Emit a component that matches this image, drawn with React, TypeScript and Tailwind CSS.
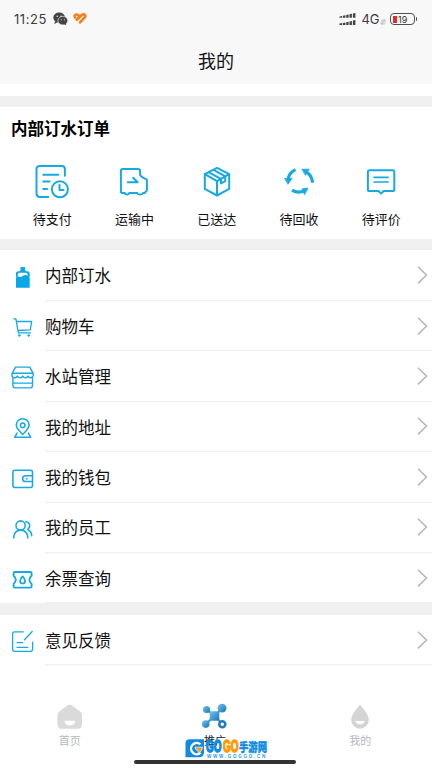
import type { ReactNode } from "react";

const BLUE = "#17a9e1";

function StatusIcons() {
  return (
    <svg viewBox="50 8 42 22" className="h-[22px] w-[42px]">
      <ellipse cx="59.2" cy="17.6" rx="5.9" ry="5.1" fill="#444" />
      <path d="M55 21l-.6 3 3-1.6z" fill="#444" />
      <ellipse cx="62.8" cy="20.6" rx="4.9" ry="4.3" fill="#444" stroke="#f8f8f8" strokeWidth=".6" />
      <path d="M64 24l2.2 1.3-.4-2.4z" fill="#444" />
      <circle cx="57.2" cy="16.3" r=".7" fill="#f8f8f8" />
      <circle cx="61" cy="16.3" r=".7" fill="#f8f8f8" />
      <circle cx="61.2" cy="19.7" r=".55" fill="#f8f8f8" />
      <circle cx="64.4" cy="19.7" r=".55" fill="#f8f8f8" />
      <g fill="none" stroke="#f58220" strokeWidth="2.7" strokeLinecap="round" strokeLinejoin="round">
        <path d="M74.9 17.3c-1-2.8 2-3.6 3.8-1.8" />
        <path d="M76.6 19.2l4.8-4c2.2-1.8 4.6-.6 3.6 1.8l-5 5.4" />
        <path d="M76.9 20.2l4-3.6" strokeWidth="2" />
      </g>
      <path d="M77.6 21.6l5-4.7" stroke="#f8f8f8" strokeWidth=".9" />
    </svg>
  );
}

function SignalIcon() {
  return (
    <svg viewBox="338 12 18 15" className="h-[15px] w-[18px]" fill="#444">
      <path d="M339.5 16.5l2.6-.6v1.8h-2.6zM342.9 15.7l2.5-.4v2.4h-2.5zM346.2 15l2.4-.5v3.2h-2.4zM349.5 14.2l2.4-.5v4h-2.4zM352.9 13.4l2.5-.5v4.8h-2.5z" />
      <path d="M339.5 23.5l2.6-.6v2h-2.6zM342.9 22.9l2.5-.4v2.4h-2.5zM346.2 22.2l2.4-.5v3.2h-2.4zM349.5 21.4l2.4-.5v4h-2.4zM352.9 20.6l2.5-.5v4.8h-2.5z" />
    </svg>
  );
}

function Battery() {
  return (
    <div className="flex items-center">
      <div className="flex h-[12px] w-[25px] items-center rounded-[4px] border-[1.5px] border-[#505050] pl-[2px]">
        <div className="h-[7px] w-[4px] bg-[#e22b2b]" />
        <span className="ml-[1.5px] text-[9px] leading-none text-[#333]">19</span>
      </div>
      <div className="ml-[1px] h-[4px] w-[1.5px] rounded-r bg-[#505050]" />
    </div>
  );
}

function OrderIcon({ x, children }: { x: number; children: ReactNode }) {
  return (
    <svg
      viewBox={`${x} 160 42 42`}
      className="h-[42px] w-[42px]"
      fill="none"
      stroke={BLUE}
      strokeWidth="2"
      strokeLinecap="round"
      strokeLinejoin="round"
    >
      {children}
    </svg>
  );
}

const orders = [
  {
    label: "待支付",
    icon: (
      <OrderIcon x={31.1}>
        <path d="M48.4 197H40q-3.4 0-3.4-3.4V169.3q0-3.3 3.4-3.3h22q3 0 3 3.3v6.4M43.3 174.7h15M43.3 181.5h6.5M43.3 189h4" />
        <circle cx="60" cy="189.3" r="8" />
        <path d="M59.6 185v5h4" />
      </OrderIcon>
    ),
  },
  {
    label: "运输中",
    icon: (
      <OrderIcon x={113.4}>
        <path d="M125.3 193H123q-1.7 0-1.7-1.8v-20q0-2.3 2-2.3h15q2.2 0 2.2 2.2v4q1.3 2.4 6.8 4.5v10.8l-2.2 2.6h-1.6M129.6 193h8.1M125.3 193q.3 1.6 2.1 1.6t2.2-1.6M137.7 193q.6 1.6 2.9 1.6t2.9-1.6M128.2 182.2h9.8l-4.4-4.4" />
      </OrderIcon>
    ),
  },
  {
    label: "已送达",
    icon: (
      <OrderIcon x={195.8}>
        <path d="M216.8 167.8l12.2 6.3v14.8l-12.2 6.6-12.2-6.6v-14.8zM204.6 174.1l12.2 7 12.2-7M216.8 181.1v14M208.4 172.2l12.6 7M213 169.7l12 6.6M220.8 179.2v4.2l4.2-2.2v-4.8" />
      </OrderIcon>
    ),
  },
  {
    label: "待回收",
    icon: (
      <OrderIcon x={278.1}>
        <g strokeWidth="3.2" strokeLinecap="butt">
          <path d="M295.6 169.6q-6.5 3-7.3 9.6M305.5 171.6q7 3.6 7 11.2M292.1 190.2q5.6 3.6 12.4.7" />
        </g>
        <path d="M285 178.4h7.2l-4 5.6zM302.3 169.2h7l-3.6 5.8zM302.4 188.8l5.7-.7-3.3 6.3z" fill={BLUE} strokeWidth=".8" />
      </OrderIcon>
    ),
  },
  {
    label: "待评价",
    icon: (
      <OrderIcon x={360.4}>
        <path d="M370 170.2h23q1.7 0 1.7 1.7v17.5q0 1.7-1.7 1.7h-8.8l-2.7 2.4-2.7-2.4H370q-1.7 0-1.7-1.7v-17.5q0-1.7 1.7-1.7z" />
        <path d="M374.5 177.3h14M374.5 182h14" strokeWidth="1.7" />
      </OrderIcon>
    ),
  },
];

function RowIcon({ top, children }: { top: number; children: ReactNode }) {
  return (
    <svg
      viewBox={`7 ${top} 30 50`}
      className="h-[50px] w-[30px] shrink-0 self-start"
      fill="none"
      stroke={BLUE}
      strokeWidth="1.55"
      strokeLinecap="round"
      strokeLinejoin="round"
    >
      {children}
    </svg>
  );
}

const rows = [
  {
    label: "内部订水",
    icon: (
      <RowIcon top={250.6}>
        <path d="M20.8 267.2h4v1.6l1 2h1.6q2.3 0 2.3 2.3v2.6q-.8 1 0 2v9.6H16v-9.6q.8-1 0-2v-2.6q0-2.3 2.6-2.3h1.2l1-2z" fill="#08a8e8" stroke="none" />
        <path d="M17.6 275.8q.2-3.4 2-3.4h6.4q1.8 0 1.8 2.6-3.4-.9-5 .5-2.4 1.9-5.2.3z" fill="white" stroke="none" />
        <path d="M20.9 267.6h3.8" stroke="#08a8e8" />
      </RowIcon>
    ),
  },
  {
    label: "购物车",
    icon: (
      <RowIcon top={301}>
        <path d="M13.7 318.8h2.2l2.5 14h12M17 321.5h14.7l-1.5 8.3-12.1.7" strokeWidth="1.3" />
        <circle cx="19.3" cy="335.4" r="1" fill={BLUE} strokeWidth=".6" />
        <circle cx="28.7" cy="335.4" r="1" fill={BLUE} strokeWidth=".6" />
      </RowIcon>
    ),
  },
  {
    label: "水站管理",
    icon: (
      <RowIcon top={351.4}>
        <path d="M15.6 367.5h14.2l3.4 6.2H12.1zM12.1 373.7v2.8q.7 1.6 2.7 1.6 1.6 0 2.6-1.6 1 1.8 2.7 1.8t2.6-1.8q1 1.8 2.7 1.8t2.6-1.8q1 1.6 2.6 1.6 2 0 2.6-1.6v-2.8M12.9 378.5V386q0 2.3 2.3 2.3h15q2.3 0 2.3-2.3v-7.5M13 383.5h19.5" strokeWidth="1.4" />
      </RowIcon>
    ),
  },
  {
    label: "我的地址",
    icon: (
      <RowIcon top={401.8}>
        <path d="M22.7 434.3q-6.4-6-6.4-9.4a6.4 6.4 0 0 1 12.8 0q0 3.4-6.4 9.4z" />
        <circle cx="22.7" cy="425" r="2.3" />
        <path d="M17 432.9l-2.3 4.2h16l-2.3-4.2" />
      </RowIcon>
    ),
  },
  {
    label: "我的钱包",
    icon: (
      <RowIcon top={452.2}>
        <rect x="12.9" y="470.4" width="19.6" height="17.2" rx="2" />
        <path d="M32.3 476H25.5a2.9 2.9 0 0 0 0 5.8h6.8" />
        <circle cx="26.8" cy="479" r=".7" fill={BLUE} strokeWidth=".4" />
      </RowIcon>
    ),
  },
  {
    label: "我的员工",
    icon: (
      <RowIcon top={502.6}>
        <circle cx="20.6" cy="525.1" r="4.6" />
        <path d="M13.7 537.5q.3-7.8 7-7.8t7.2 7.8M25.7 521.3q3.7.3 4 3.8.1 2.2-2 4 4 1.8 4 6.2" />
      </RowIcon>
    ),
  },
  {
    label: "余票查询",
    icon: (
      <RowIcon top={553}>
        <path d="M14.8 572h15.6q1.2 0 1.2 1.4v2.3q-2.2 1.8-2.2 4t2.2 4.2v2.3q0 1.4-1.2 1.4H14.8q-1.2 0-1.2-1.4v-2.3q2.2-2 2.2-4.2t-2.2-4v-2.3q0-1.4 1.2-1.4z" strokeWidth="1.9" />
        <path d="M22.6 576.4q-2.5 2.6-2.5 4.5a2.5 2.5 0 0 0 5 0q0-1.9-2.5-4.5z" strokeWidth="1.8" />
      </RowIcon>
    ),
  },
];

const feedback = {
  label: "意见反馈",
  icon: (
    <RowIcon top={615}>
      <path d="M23.2 631.8H14.6q-2 0-2 2V649q0 2.4 2 2.4h16q2 0 2-2.4v-6.8M32.2 631.5l-7.7 8.2M17 642.6h5.7M17 647.4h10.7" strokeWidth="1.3" />
    </RowIcon>
  ),
};

function Row({ label, icon }: { label: string; icon: ReactNode }) {
  return (
    <div className="flex h-[50.4px] pl-[7px]">
      {icon}
      <div className="ml-2 flex flex-1 items-center justify-between border-b border-[#eeeeee] pr-[4px] text-[16.5px] text-[#111]">
        <span className="pt-[1px]">{label}</span>
        <svg viewBox="0 0 12 20" className="h-5 w-3" fill="none" stroke="#b8b8b8" strokeWidth="1.5">
          <path d="M2 1.8l8.5 8.3L2 18.4" />
        </svg>
      </div>
    </div>
  );
}

function Watermark() {
  return (
    <div className="absolute top-[739px] left-[185px] flex h-[22px] w-[84px]">
      <svg viewBox="185 739 20 20" className="h-5 w-5 shrink-0">
        <path d="M189.5 739.3H204v13q0 5-5 5h-13.5v-14q0-4 4-4z" fill="#118be2" />
        <path d="M200.4 744.4a5.6 5.6 0 1 0 .2 8.2" fill="none" stroke="white" strokeWidth="2.4" />
        <path d="M195 747.2h7.6q-.5 4.2-4.2 6l-.6-3.2h-1.6z" fill="#f39a19" stroke="white" strokeWidth=".7" />
      </svg>
      <div className="ml-[1px]">
        <div className="flex h-[15.5px] items-center whitespace-nowrap">
          <span className="inline-block w-[16.5px] origin-left scale-x-[.62] font-['Liberation_Sans'] text-[16px] leading-[15px] font-bold text-[#118be2] [-webkit-text-stroke:1.5px_#118be2]">GO</span>
          <span className="inline-block w-[16px] origin-left scale-x-[.62] font-['Liberation_Sans'] text-[16px] leading-[15px] font-bold text-[#ff9900] [-webkit-text-stroke:1.5px_#ff9900]">GO</span>
          <span className="inline-block origin-left scale-x-[.78] text-[12px] leading-[15px] font-black text-[#118be2] [-webkit-text-stroke:.4px_#118be2]">手游网</span>
        </div>
        <div className="pl-[1px] font-['Liberation_Sans'] text-[4.5px] leading-[4px] font-bold tracking-[1.75px] whitespace-nowrap text-[#169de4]">WWW.GOGGO.CN</div>
      </div>
    </div>
  );
}

export default function App() {
  return (
    <main className="relative flex h-[768px] w-[432px] flex-col overflow-hidden bg-white font-['Noto_Sans_CJK_SC',sans-serif] text-[#111]">
      <header className="h-[84px] shrink-0 bg-[#f8f8f8]">
        <div className="flex h-[38px] items-center justify-between pr-[15px] pl-[14px] font-['Inter','Noto_Sans_CJK_SC',sans-serif] text-[#3d3d3d]">
          <div className="flex items-center">
            <span className="w-[36px] pt-[1px] text-[13px] tracking-[.55px]">11:25</span>
            <StatusIcons />
          </div>
          <div className="flex items-center">
            <SignalIcon />
            <span className="ml-[5px] pt-[1px] text-[13px]">4G</span>
            <svg viewBox="0 0 6 6" className="mt-[6px] mr-[4px] h-[6px] w-[6px]" stroke="#999" strokeWidth=".8" fill="none">
              <path d="M2 .5v5L.5 4M4 5.5v-5L5.5 2" />
            </svg>
            <Battery />
          </div>
        </div>
        <h1 className="pt-[9px] text-center text-[18px] leading-[27px]">我的</h1>
      </header>
      <div className="mt-3 h-[11px] shrink-0 bg-[#f0f0f0]" />
      <section className="h-[132px] shrink-0">
        <h2 className="pt-[9px] pl-[11px] text-[16.5px] leading-[24px] font-bold text-black">内部订水订单</h2>
        <div className="mt-[20px] grid grid-cols-5 pr-[9.5px] pl-[11px]">
          {orders.map((order) => (
            <div key={order.label} className="flex flex-col items-center">
              {order.icon}
              <span className="mt-[7px] text-[13px] leading-[20px]">{order.label}</span>
            </div>
          ))}
        </div>
      </section>
      <div className="h-[11px] shrink-0 bg-[#f0f0f0]" />
      <section className="h-[353px] shrink-0 pt-[0.6px]">
        {rows.map((row) => (
          <Row key={row.label} {...row} />
        ))}
      </section>
      <div className="h-[12px] shrink-0 bg-[#f0f0f0]" />
      <section className="h-[50px] shrink-0">
        <Row {...feedback} />
      </section>
      <nav className="-mr-[1px] -ml-[3px] grid flex-1 grid-cols-3 pt-[35px] text-center text-[11px] leading-[16px] text-[#b8b8bd]">
        <div className="flex flex-col items-center">
          <svg viewBox="53 700 34 32" className="h-8 w-[34px]">
            <path d="M69.8 704.5q1 0 2 .8l8 6q2.2 1.6 2.2 4v9q0 4.5-4.5 4.5H62q-4.5 0-4.5-4.5v-9q0-2.4 2-4l8.2-6q1-.8 2.1-.8z" fill="#dadada" />
            <path d="M64.3 720.7h11q-.8 4.8-5.5 4.8t-5.5-4.8z" fill="white" />
          </svg>
          <span>首页</span>
        </div>
        <div className="flex flex-col items-center text-[#222]">
          <svg viewBox="199 700 34 32" className="h-8 w-[34px]">
            <defs>
              <linearGradient id="network" x1="0" y1="0" x2="1" y2="1">
                <stop offset="0" stopColor="#6fc5f0" />
                <stop offset="1" stopColor="#1873b8" />
              </linearGradient>
            </defs>
            <path d="M207.5 709.5l8 6.2 7.5-7M207.5 723.7l8-8 7.5 8" fill="none" stroke="#389bd1" strokeWidth="2.2" />
            <g fill="url(#network)">
              <circle cx="207.5" cy="709.6" r="3.5" />
              <circle cx="223" cy="708.2" r="4.4" />
              <rect x="210.7" y="711.2" width="9.6" height="9.6" rx="2.8" />
              <circle cx="206.7" cy="724.1" r="3.8" />
            </g>
            <circle cx="223.3" cy="724.2" r="3" fill="white" stroke="#237db9" strokeWidth="2.6" />
          </svg>
          <span>推广</span>
        </div>
        <div className="flex flex-col items-center">
          <svg viewBox="344 700 34 32" className="h-8 w-[34px]">
            <path d="M361 704.8q8.9 9.8 8.9 15a8.9 8.9 0 0 1-17.8 0q0-5.2 8.9-15z" fill="#d4d4d4" />
            <path d="M356.4 721h9.2q-.8 3.2-4.6 3.2t-4.6-3.2z" fill="white" />
          </svg>
          <span>我的</span>
        </div>
      </nav>
      <Watermark />
      <div className="absolute top-[760px] left-[134px] h-[4px] w-[162px] rounded-full bg-[#333]" />
    </main>
  );
}
